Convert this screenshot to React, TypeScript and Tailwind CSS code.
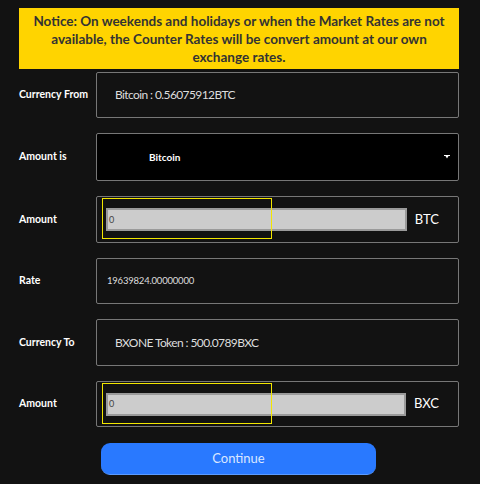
const font = { fontFamily: 'Lato, "Open Sans", "Liberation Sans", sans-serif' };

function Row({ label, children, h = "h-[46px]" }: { label: string; children: React.ReactNode; h?: string }) {
  return (
    <div className="flex items-center">
      <div className="w-[77px] text-[10.5px] font-bold text-white">{label}</div>
      <div className={`flex-1 ${h} rounded-[2px] border border-[#777] flex items-center`}>{children}</div>
    </div>
  );
}

function AmountInput({ unit }: { unit: string }) {
  return (
    <div className="flex items-center w-full pl-[5px] pr-[19px]">
      <div className="relative flex-1">
        <div className="absolute left-0 top-[-10px] w-[170px] h-[41px] border border-[#f2e600]" />
        <div className="ml-[4px] h-[23px] bg-[#cccccc] border-2 border-[#9a9a9a] flex items-center pl-[1px] text-[9px] text-[#444]">
          0
        </div>
      </div>
      <div className="ml-[8px] text-[13px] text-white">{unit}</div>
    </div>
  );
}

export default function App() {
  return (
    <div className="min-h-[484px] bg-[#121212] pl-[19px] pr-[21px] pt-[8px]" style={font}>
      <div className="bg-[#ffd400] px-3 pt-[4px] pb-[3px] text-center text-[13.5px] leading-[18px] font-bold text-[#333]">
        Notice: On weekends and holidays or when the Market Rates are not available, the Counter Rates will be convert
        amount at our own exchange rates.
      </div>

      <div className="mt-[3px] flex flex-col gap-[15px]">
        <Row label="Currency From">
          <span className="pl-[18px] text-[12px] tracking-[-0.6px] text-[#ddd]">Bitcoin : 0.56075912BTC</span>
        </Row>
        <Row label="Amount is" h="h-[48px] bg-black">
          <span className="pl-[52px] text-[10px] font-bold text-white flex-1">Bitcoin</span>
          <svg width="6" height="4" viewBox="0 0 6 4" className="mr-[8px]">
            <path d="M0 0H6V1H4.5L3 3.5L1.5 1H0Z" fill="#fff" />
          </svg>
        </Row>
        <Row label="Amount" h="h-[47px]">
          <AmountInput unit="BTC" />
        </Row>
        <Row label="Rate">
          <span className="pl-[10px] text-[9.5px] text-[#ddd]" style={{ letterSpacing: "-0.2px" }}>
            19639824.00000000
          </span>
        </Row>
        <Row label="Currency To" h="h-[47px]">
          <span className="pl-[18px] text-[12px] tracking-[-0.6px] text-[#ddd]">BXONE Token : 500.0789BXC</span>
        </Row>
        <Row label="Amount">
          <AmountInput unit="BXC" />
        </Row>
      </div>

      <div className="mt-[16px] pl-[82px] pr-[83px]">
        <button className="w-full h-[32px] rounded-[9px] bg-[#2979ff] border-b border-[#5b9bff] text-[13px] text-[#dbe7ff]">
          Continue
        </button>
      </div>
    </div>
  );
}
